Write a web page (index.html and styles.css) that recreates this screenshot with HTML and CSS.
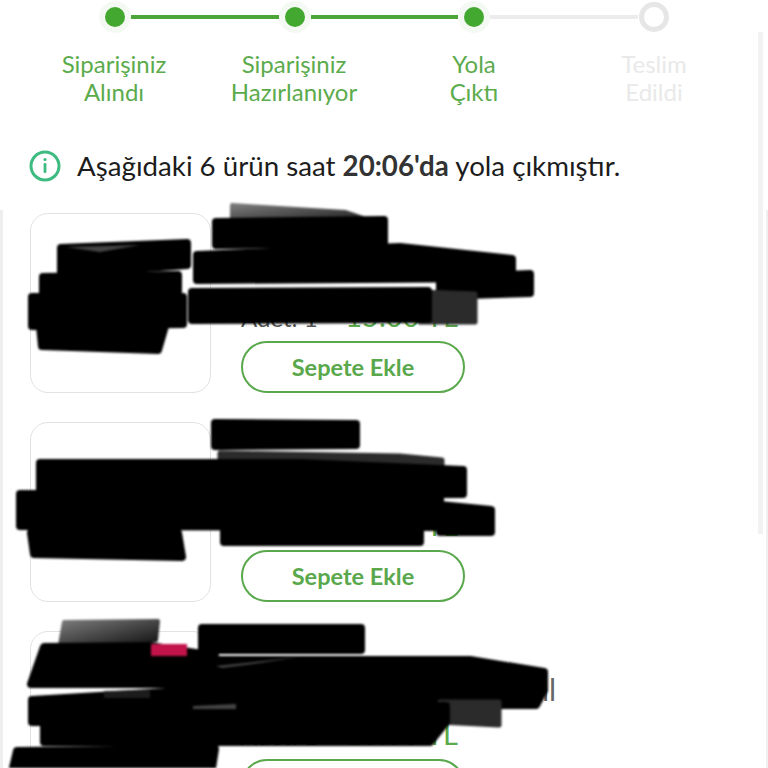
FILE: index.html
```html
<!DOCTYPE html>
<html lang="tr">
<head>
    <meta charset="UTF-8">
    <meta name="viewport" content="width=device-width, initial-scale=1.0">
    <title>Sipariş Takibi</title>
    <link rel="stylesheet" href="styles.css">
</head>
<body>
    <div class="page">
        <div class="track">
            <span class="dot"></span>
            <span class="line"></span>
            <span class="dot"></span>
            <span class="line"></span>
            <span class="dot"></span>
            <span class="line line-off"></span>
            <span class="dot dot-off"></span>
        </div>
        <div class="labels">
            <div class="label">Siparişiniz<br>Alındı</div>
            <div class="label">Siparişiniz<br>Hazırlanıyor</div>
            <div class="label">Yola<br>Çıktı</div>
            <div class="label label-off">Teslim<br>Edildi</div>
        </div>

        <div class="notice">
            <svg class="notice-icon" width="32" height="32" viewBox="0 0 32 32">
                <circle cx="16" cy="16" r="14" fill="none" stroke="#3dbb80" stroke-width="3"/>
                <circle cx="16" cy="9.5" r="1.6" fill="#3dbb80"/>
                <rect x="14.6" y="13" width="2.8" height="10" rx="1.2" fill="#3dbb80"/>
            </svg>
            <p>Aşağıdaki 6 ürün saat <b>20:06'da</b> yola çıkmıştır.</p>
        </div>

        <div class="list">
            <div class="product">
                <div class="thumb"></div>
                <div class="info">
                    <div class="meta"><span>Adet: 1</span><span class="price">15.00 TL</span></div>
                    <button type="button" class="add">Sepete Ekle</button>
                </div>
            </div>
            <div class="product">
                <div class="thumb"></div>
                <div class="info">
                    <div class="meta"><span>Adet: 1</span><span class="price">15.00 TL</span></div>
                    <button type="button" class="add">Sepete Ekle</button>
                </div>
            </div>
            <div class="product">
                <div class="thumb"></div>
                <div class="info">
                    <div class="name">ml</div>
                    <div class="meta"><span>Adet: 1</span><span class="price">15.00 TL</span></div>
                    <button type="button" class="add" aria-label="Sepete Ekle"></button>
                </div>
            </div>
        </div>

        <div class="scrollbar"></div>

        <!-- hand-drawn black marks over the product details -->
        <svg class="marks" width="768" height="768" viewBox="0 0 768 768">
            <defs>
                <linearGradient id="fade" x1="0" y1="0" x2="1" y2="1">
                    <stop offset="0" stop-color="#7a7a7a"/>
                    <stop offset="1" stop-color="#111"/>
                </linearGradient>
            </defs>
            <path class="mark-fade" d="M232 205 L345 212 L380 224 L232 224 Z"/>
            <path class="mark" d="M216 222 L384 220 L384 243 L216 245 Z"/>
            <path class="mark" d="M197 255 L400 247 L512 259 L512 278 L197 280 Z"/>
            <path class="mark" d="M440 278 L530 274 L530 293 L440 296 Z"/>
            <path class="mark-grey" d="M420 292 L475 294 L475 322 L420 322 Z"/>
            <path class="mark" d="M192 292 L428 291 L428 319 L192 320 Z"/>
            <path class="mark" d="M61 248 L187 243 L187 265 L61 274 Z"/>
            <path class="mark" d="M43 277 L178 275 L178 292 L43 294 Z"/>
            <path class="mark" d="M32 297 L183 297 L183 324 L32 326 Z"/>
            <path class="mark" d="M40 326 L165 326 L158 350 L42 346 Z"/>
            <path class="streak" d="M66 247 L140 245 L100 252 Z"/>

            <path class="mark" d="M215 423 L356 424 L356 445 L215 446 Z"/>
            <path class="mark-grey" d="M220 453 L400 456 L442 460 L442 468 L220 468 Z"/>
            <path class="mark" d="M40 463 L300 463 L463 470 L463 494 L40 496 Z"/>
            <path class="mark" d="M20 494 L300 494 L440 498 L440 527 L20 526 Z"/>
            <path class="mark" d="M440 505 L491 510 L491 532 L440 532 Z"/>
            <path class="mark" d="M224 530 L420 530 L420 542 L224 542 Z"/>
            <path class="mark" d="M31 533 L178 533 L182 557 L34 554 Z"/>

            <path class="mark-fade" d="M64 622 L158 621 L156 640 L60 645 Z"/>
            <path class="mark" d="M202 628 L361 628 L361 650 L202 650 Z"/>
            <path class="mark" d="M44 647 L150 646 L215 656 L215 684 L31 684 Z"/>
            <path class="mark" d="M200 660 L470 660 L544 672 L544 690 L536 705 L200 706 Z"/>
            <path class="mark-grey" d="M440 702 L499 702 L499 725 L440 722 Z"/>
            <path class="mark" d="M32 700 L200 690 L200 722 L32 722 Z"/>
            <path class="mark" d="M44 710 L446 706 L446 722 L430 742 L44 742 Z"/>
            <path class="mark" d="M17 751 L215 749 L212 768 L13 768 Z"/>
            <rect class="mark-red" x="151" y="644" width="36" height="12"/>
            <path class="streak" d="M216 666 L300 657 L260 663 L222 668 Z"/>
            <path class="streak" d="M193 706 L236 704 L236 709 L193 709 Z"/>
            <path class="streak-dim" d="M104 691 L150 690 L150 698 L104 698 Z"/>
        </svg>
    </div>
</body>
</html>
```

FILE: styles.css
```css
body {
    margin: 0;
    background-color: #fff;
    font-family: Lato, "Noto Sans", sans-serif;
}

.page {
    position: relative;
    width: 768px;
    height: 768px;
    overflow: hidden;
    background-color: #fff;
}

/* stepper */
.track {
    display: flex;
    align-items: center;
    height: 34px;
    padding-left: 99px;
}

.dot {
    flex: none;
    box-sizing: border-box;
    width: 20px;
    height: 20px;
    margin: 0 6px;
    border-radius: 50%;
    background-color: #43a82f;
    box-shadow: 0 0 0 6px #f5f9f3;
}

.dot-off {
    width: 30px;
    height: 30px;
    margin: 0 1px;
    background-color: #fff;
    border: 5px solid #e6e6e6;
    box-shadow: none;
}

.line {
    flex: none;
    width: 147.5px;
    height: 4px;
    background-color: #4ca637;
}

.line-off {
    width: 148px;
    background-color: #ececec;
}

.labels {
    display: grid;
    grid-template-columns: repeat(4, 180px);
    margin: 16px 0 0 24px;
}

.label {
    font-size: 24px;
    line-height: 28px;
    text-align: center;
    color: #5cab4d;
}

.label-off {
    color: #e9e9e9;
}

/* info line */
.notice {
    display: flex;
    align-items: center;
    gap: 16px;
    margin: 31px 0 0 29px;
    height: 58px;
    color: #1c1c1c;
}

.notice-icon {
    flex: none;
}

.notice p {
    margin: 0;
    font-size: 27.7px;
    line-height: 32px;
}

.notice b {
    font-weight: 700;
    color: #333;
}

/* product list */
.list {
    display: flex;
    flex-direction: column;
    gap: 29px;
    box-sizing: border-box;
    height: 558px;
    margin-top: 15px;
    padding: 3px 0 0 27px;
    border-left: 3px solid #eee;
    border-right: 2px solid #efefef;
}

.product {
    display: flex;
    flex: none;
    gap: 30px;
    height: 180px;
}

.thumb {
    flex: none;
    box-sizing: border-box;
    width: 181px;
    height: 180px;
    border: 1px solid #e2e2e2;
    border-radius: 18px;
}

.info {
    display: flex;
    flex-direction: column;
    justify-content: flex-end;
    width: 315px;
}

.name {
    margin-bottom: 17px;
    font-size: 30px;
    line-height: 28px;
    text-align: right;
    color: #666;
}

.meta {
    display: flex;
    justify-content: space-between;
    align-items: baseline;
    width: 217px;
    height: 28px;
    margin-bottom: 11px;
    font-size: 24px;
    line-height: 28px;
    color: #555;
}

.price {
    font-size: 29px;
    color: #5cab4d;
}

.add {
    flex: none;
    box-sizing: border-box;
    width: 224px;
    height: 52px;
    padding: 0;
    border: 2px solid #5aa84c;
    border-radius: 26px;
    background-color: #fff;
    color: #5aa84c;
    font-family: inherit;
    font-size: 23.5px;
    font-weight: 700;
}

.scrollbar {
    position: absolute;
    top: 32px;
    left: 758px;
    width: 5px;
    height: 502px;
    background-color: #f2f2f2;
}

/* marks over the product details */
.marks {
    position: absolute;
    top: 0;
    left: 0;
    filter: blur(1px);
}

.mark {
    fill: #000;
    stroke: #000;
    stroke-width: 8;
    stroke-linejoin: round;
}

.mark-grey {
    fill: #2b2b2b;
    stroke: #2b2b2b;
    stroke-width: 5;
    stroke-linejoin: round;
}

.mark-fade {
    fill: url(#fade);
    stroke: url(#fade);
    stroke-width: 4;
    stroke-linejoin: round;
}

.mark-red {
    fill: #c2134a;
}

.streak {
    fill: #444;
}

.streak-dim {
    fill: #1c1c1c;
}
```
